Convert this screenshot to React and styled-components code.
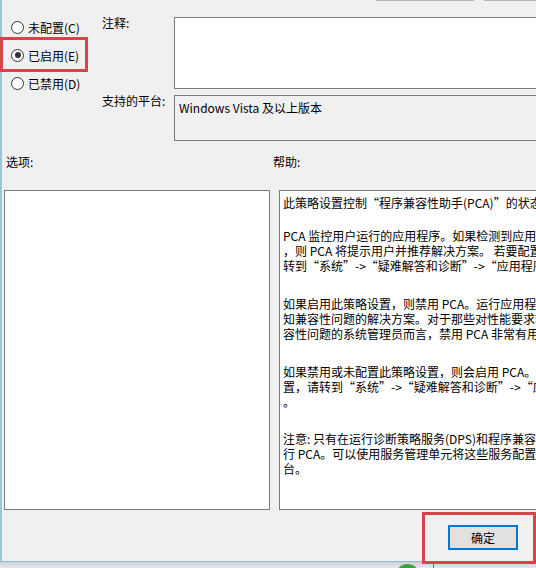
import React from "react";
import styled, { createGlobalStyle, css } from "styled-components";

const Global = createGlobalStyle`
  html, body {
    margin: 0;
    padding: 0;
    overflow: hidden;
    background: #e4e4ea;
  }
  body {
    font-family: "Noto Sans CJK SC", "Noto Sans", sans-serif;
    font-size: 12px;
    color: #000;
  }
`;

const Window = styled.div`
  position: relative;
  width: 534px;
  height: 561px;
  background: #f0f0f0;
  border-left: 2px solid #9fc7d3;
  border-bottom: 1px solid #8fbccb;
  display: flex;
  flex-direction: column;
`;

const TopStrip = styled.div`
  height: 2px;
  display: flex;
  gap: 10px;
  padding-left: 374px;
  margin-right: -6px;
`;

const ButtonStub = styled.div`
  width: ${(p) => p.$w}px;
  height: 1px;
  background: #b4b4b4;
`;

const Upper = styled.div`
  display: grid;
  grid-template-columns: 100px 72px 1fr;
  grid-template-rows: 72px 46px;
  row-gap: 6px;
  margin-top: 15px;
  margin-right: -6px;
`;

const RadioColumn = styled.div`
  grid-row: 1 / span 2;
  display: flex;
  flex-direction: column;
  align-items: flex-start;
  margin-top: -4px;
`;

const RadioItem = styled.label`
  position: relative;
  height: 28px;
  display: flex;
  align-items: center;
  gap: 4px;
  padding-left: 9px;
  white-space: nowrap;
  line-height: 15px;

  ${(p) =>
    p.$marked &&
    css`
      &::after {
        content: "";
        position: absolute;
        top: -4px;
        bottom: -3px;
        left: -2px;
        width: 82px;
        border: 3px solid #d6454b;
        pointer-events: none;
      }
    `}
`;

const RadioCircle = styled.span`
  width: 11px;
  height: 11px;
  border-radius: 50%;
  border: 1px solid #333;
  background: #fff;
  display: flex;
  align-items: center;
  justify-content: center;

  &::before {
    content: "";
    width: 6px;
    height: 6px;
    border-radius: 50%;
    background: ${(p) => (p.$checked ? "#333" : "transparent")};
  }
`;

const FieldLabel = styled.div`
  line-height: 15px;
  margin-top: -2px;
  white-space: nowrap;
`;

const Field = styled.div`
  border: 1px solid #7a7a7a;
  background: ${(p) => (p.$readonly ? "#f0f0f0" : "#fff")};
  padding: 4px 4px;
  line-height: 15px;
  white-space: nowrap;
  overflow: hidden;
`;

const SectionLabels = styled.div`
  display: grid;
  grid-template-columns: 267px 1fr;
  padding-left: 4px;
  margin-top: 13px;
  line-height: 15px;
`;

const Panels = styled.div`
  display: grid;
  grid-template-columns: 266px 1fr;
  column-gap: 9px;
  height: 320px;
  padding-left: 2px;
  margin-top: 21px;
  margin-right: -6px;
`;

const Panel = styled.div`
  border: 1px solid #7a7a7a;
  background: #fff;
  overflow: hidden;
`;

const HelpText = styled(Panel)`
  padding: 4px 3px 3px;
`;

const Para = styled.div`
  margin-bottom: ${(p) => p.$gap}px;
`;

const Line = styled.div`
  line-height: 15px;
  height: 15px;
  white-space: nowrap;
`;

const Footer = styled.div`
  display: flex;
  justify-content: flex-end;
  padding-top: 15px;
  padding-right: 18px;
`;

const OkButton = styled.button`
  position: relative;
  width: 70px;
  height: 25px;
  border: 2px solid #0078d7;
  background: #e1e1e1;
  font: inherit;
  color: #000;
  padding: 0;

  &::after {
    content: "";
    position: absolute;
    top: -15px;
    bottom: -16px;
    left: -28px;
    right: -20px;
    border: 3px solid #d6454b;
    pointer-events: none;
  }
`;

const Backdrop = styled.div`
  height: 6px;
  display: flex;
  align-items: flex-start;
  background: linear-gradient(#cfd0d8, #e6e6ec);
`;

const Dome = styled.span`
  margin-left: 395px;
  margin-top: 2px;
  width: 25px;
  height: 25px;
  border-radius: 50%;
  background: #3fa33c;
`;

const Divider = styled.span`
  margin-left: 13px;
  width: 1px;
  height: 6px;
  background: #6b6b6b;
`;

const radios = [
  { label: "未配置(C)", checked: false },
  { label: "已启用(E)", checked: true, marked: true },
  { label: "已禁用(D)", checked: false },
];

const help = [
  { gap: 18, lines: ["此策略设置控制“程序兼容性助手(PCA)”的状态。"] },
  {
    gap: 23,
    lines: [
      "PCA 监控用户运行的应用程序。如果检测到应用程序存在潜在的兼容性问题",
      "，则 PCA 将提示用户并推荐解决方案。 若要配置 PCA 的诊断设置，请",
      "转到“系统”->“疑难解答和诊断”->“应用程序兼容性诊断”。",
    ],
  },
  {
    gap: 23,
    lines: [
      "如果启用此策略设置，则禁用 PCA。运行应用程序时，将不向用户提供已",
      "知兼容性问题的解决方案。对于那些对性能要求较高而又清楚应用程序兼",
      "容性问题的系统管理员而言，禁用 PCA 非常有用。",
    ],
  },
  {
    gap: 22,
    lines: [
      "如果禁用或未配置此策略设置，则会启用 PCA。若要配置 PCA 的诊断设",
      "置，请转到“系统”->“疑难解答和诊断”->“应用程序兼容性诊断”",
      "。",
    ],
  },
  {
    gap: 0,
    lines: [
      "注意: 只有在运行诊断策略服务(DPS)和程序兼容性助手服务时，才会运",
      "行 PCA。可以使用服务管理单元将这些服务配置为在 Microsoft 管理控制",
      "台。",
    ],
  },
];

export default function App() {
  return (
    <>
      <Global />
      <Window>
        <TopStrip>
          <ButtonStub $w={100} />
          <ButtonStub $w={60} />
        </TopStrip>

        <Upper>
          <RadioColumn>
            {radios.map((r) => (
              <RadioItem key={r.label} $marked={r.marked}>
                <RadioCircle $checked={r.checked} />
                {r.label}
              </RadioItem>
            ))}
          </RadioColumn>
          <FieldLabel>注释:</FieldLabel>
          <Field />
          <FieldLabel>支持的平台:</FieldLabel>
          <Field $readonly>Windows Vista 及以上版本</Field>
        </Upper>

        <SectionLabels>
          <span>选项:</span>
          <span>帮助:</span>
        </SectionLabels>

        <Panels>
          <Panel />
          <HelpText>
            {help.map((p, i) => (
              <Para key={i} $gap={p.gap}>
                {p.lines.map((l, j) => (
                  <Line key={j}>{l}</Line>
                ))}
              </Para>
            ))}
          </HelpText>
        </Panels>

        <Footer>
          <OkButton>确定</OkButton>
        </Footer>
      </Window>
      <Backdrop>
        <Dome />
        <Divider />
      </Backdrop>
    </>
  );
}
